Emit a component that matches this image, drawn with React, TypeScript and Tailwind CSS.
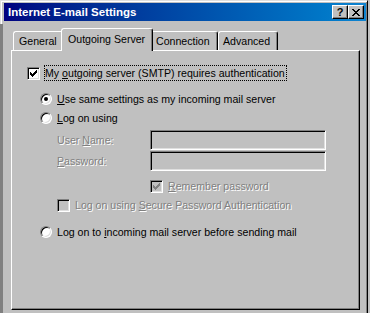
import React from 'react';

const sunken =
  'border border-t-[#808080] border-l-[#808080] border-b-white border-r-white shadow-[inset_1px_1px_0_#000,inset_-1px_-1px_0_#dfdfdf]';

function CheckMark({ color }: { color: string }) {
  const px = [
    [6, 0], [5, 1], [6, 1], [0, 2], [4, 2], [5, 2], [6, 2],
    [0, 3], [1, 3], [3, 3], [4, 3], [5, 3], [0, 4], [1, 4], [2, 4], [3, 4], [4, 4],
    [1, 5], [2, 5], [3, 5], [2, 6],
  ];
  return (
    <svg width="7" height="7" viewBox="0 0 7 7" shapeRendering="crispEdges">
      {px.map(([x, y], i) => (
        <rect key={i} x={x} y={y} width="1" height="1" fill={color} />
      ))}
    </svg>
  );
}

function Check({ checked, disabled }: { checked?: boolean; disabled?: boolean }) {
  return (
    <div className={`w-[13px] h-[13px] shrink-0 flex items-center justify-center ${sunken} ${disabled ? 'bg-[#c0c0c0]' : 'bg-white'}`}>
      {checked && <CheckMark color={disabled ? '#808080' : '#000'} />}
    </div>
  );
}

function Radio({ on }: { on?: boolean }) {
  return (
    <div className="w-[12px] h-[12px] shrink-0 rounded-full bg-white border border-t-[#808080] border-l-[#808080] border-b-white border-r-white shadow-[inset_1px_1px_0_#000,inset_-1px_-1px_0_#dfdfdf] flex items-center justify-center">
      {on && <div className="w-[4px] h-[4px] rounded-full bg-black" />}
    </div>
  );
}

const dim = 'text-[#808080] [text-shadow:1px_1px_0_#fff]';

export default function App() {
  return (
    <div className="w-[370px] h-[313px] bg-[#c0c0c0] overflow-hidden text-black text-[10.6px] leading-[13px] font-['Liberation_Sans',Arial,sans-serif]">
      <div className="w-[368px] h-full border-t border-t-[#dfdfdf] border-r border-r-black shadow-[inset_0_1px_0_#fff,inset_-1px_0_0_#808080] flex flex-col">
        {/* Title area */}
        <div className="h-[23px] border-l border-l-[#dfdfdf] shadow-[inset_1px_1px_0_#fff]">
          <div className="mt-[2px] ml-[3px] mr-[1px] h-[18px] bg-gradient-to-r from-[#000080] to-[#1084d0] flex items-center justify-between pl-[4px] pr-[2px]">
            <span className="text-white font-bold text-[11.5px]">Internet E-mail Settings</span>
            <div className="flex">
              <div className="w-[16px] h-[14px] bg-[#c0c0c0] border border-t-white border-l-white border-b-black border-r-black shadow-[inset_-1px_-1px_0_#808080] flex items-center justify-center font-bold text-[11px] leading-none">?</div>
              <div className="w-[16px] h-[14px] bg-[#c0c0c0] border border-t-white border-l-white border-b-black border-r-black shadow-[inset_-1px_-1px_0_#808080] flex items-center justify-center">
                <svg width="8" height="7" viewBox="0 0 8 7" shapeRendering="crispEdges">
                  <path d="M0 0h2v1h-2zM6 0h2v1h-2zM1 1h2v1h-2zM5 1h2v1h-2zM2 2h4v1h-4zM3 3h2v1h-2zM2 4h4v1h-4zM1 5h2v1h-2zM5 5h2v1h-2zM0 6h2v1h-2zM6 6h2v1h-2z" fill="#000" />
                </svg>
              </div>
            </div>
          </div>
        </div>

        <div className="flex-1 border-l-[3px] border-l-[#808080] flex flex-col">
          {/* Tabs */}
          <div className="mt-[4px] h-[22px] pl-[10px] flex items-end">
            <div className="w-[48px] h-[19px] border-l border-t border-white rounded-tl-[3px] pt-[3px] pl-[5px]">General</div>
            <div className="relative z-10 -mb-[1px] w-[92px] h-[23px] bg-[#c0c0c0] border-l border-t border-white border-r border-r-black rounded-t-[3px] shadow-[inset_-1px_0_0_#808080] pt-[4px] pl-[6px]">Outgoing Server</div>
            <div className="w-[65px] h-[19px] border-t border-white border-r border-r-black rounded-tr-[3px] shadow-[inset_-1px_0_0_#808080] pt-[3px] pl-[3px]">Connection</div>
            <div className="w-[60px] h-[19px] border-l border-t border-white border-r border-r-black rounded-t-[3px] shadow-[inset_-1px_0_0_#808080] pt-[3px] pl-[4px]">Advanced</div>
          </div>

          {/* Panel */}
          <div className="ml-[8px] w-[349px] h-[260px] border-l border-t border-white border-r border-b border-r-black border-b-black shadow-[inset_-1px_-1px_0_#808080] flex flex-col">
            <div className="mt-[14px] h-[16px] pl-[15px] flex items-center">
              <Check checked />
              <div className="ml-[4px] h-[16px] pr-[1px] border border-dotted border-black flex items-center">
                <span>My <u>o</u>utgoing server (SMTP) requires authentication</span>
              </div>
            </div>

            <div className="mt-[10px] h-[16px] pl-[28px] flex items-center gap-[5px]">
              <Radio on />
              <span><u>U</u>se same settings as my incoming mail server</span>
            </div>

            <div className="mt-[3px] h-[16px] pl-[28px] flex items-center gap-[5px]">
              <Radio />
              <span><u>L</u>og on using</span>
            </div>

            <div className="mt-[4px] h-[20px] pl-[45px] flex items-center">
              <span className={`w-[93px] ${dim}`}>User <u>N</u>ame:</span>
              <div className={`w-[176px] h-[20px] bg-[#c0c0c0] ${sunken}`} />
            </div>

            <div className="mt-[1px] h-[20px] pl-[45px] flex items-center">
              <span className={`w-[93px] ${dim}`}><u>P</u>assword:</span>
              <div className={`w-[176px] h-[20px] bg-[#c0c0c0] ${sunken}`} />
            </div>

            <div className="mt-[7px] h-[16px] pl-[138px] flex items-center gap-[5px]">
              <Check checked disabled />
              <span className={dim}><u>R</u>emember password</span>
            </div>

            <div className="mt-[3px] h-[16px] pl-[45px] flex items-center gap-[5px]">
              <Check disabled />
              <span className={dim}>Log on using <u>S</u>ecure Password Authentication</span>
            </div>

            <div className="mt-[11px] h-[16px] pl-[28px] flex items-center gap-[5px]">
              <Radio />
              <span>Log on to <u>i</u>ncoming mail server before sending mail</span>
            </div>
          </div>
        </div>
      </div>
    </div>
  );
}
